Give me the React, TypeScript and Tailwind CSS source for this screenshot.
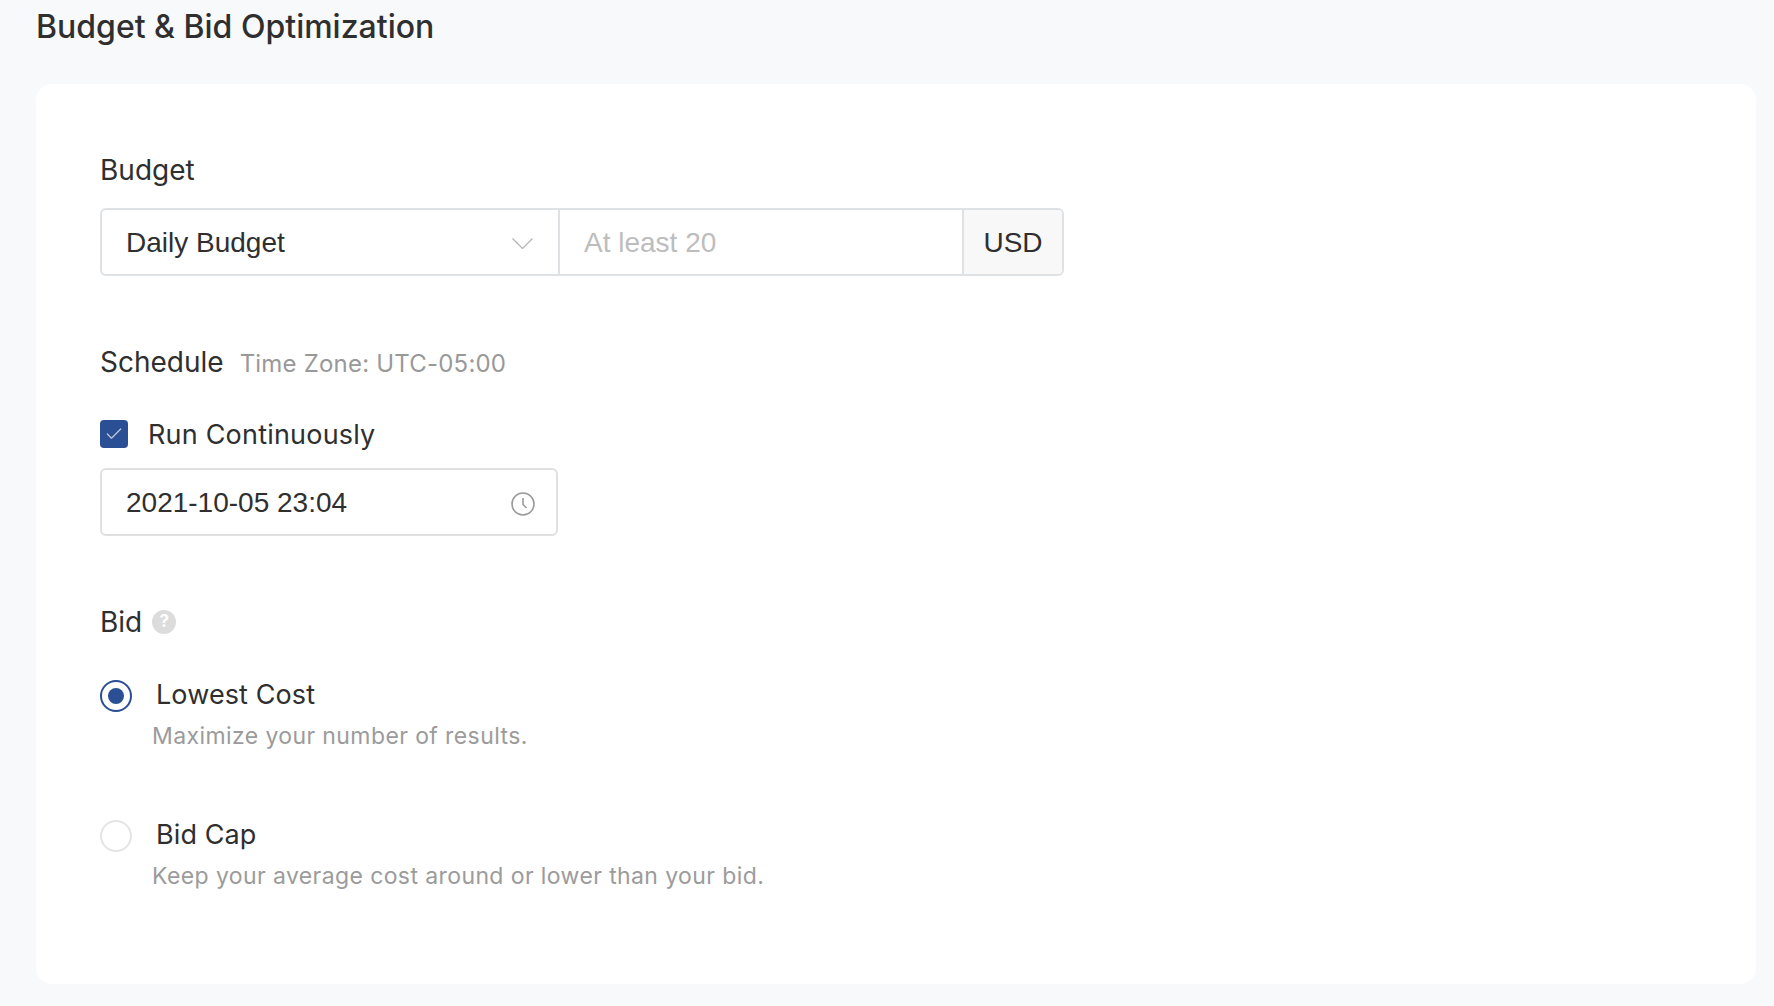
import { Check } from 'lucide-react';

function Radio({ checked }: { checked?: boolean }) {
    return (
        <span className={`flex h-8 w-8 shrink-0 items-center justify-center rounded-full border-2 ${checked ? 'border-[#2a4f94]' : 'border-[#e2e4e6]'}`}>
            {checked && <span className="h-4 w-4 rounded-full bg-[#2a4f94]" />}
        </span>
    );
}

function BidOption({ label, hint, checked }: { label: string; hint: string; checked?: boolean }) {
    return (
        <div>
            <div className="flex h-8 items-center">
                <Radio checked={checked} />
                <span className="mb-[2px] ml-6 text-[27px] tracking-[0.1px] text-[#2f2f2f]">{label}</span>
            </div>
            <p className="ml-[52px] mt-2 h-8 text-[23px] leading-8 tracking-[0.4px] text-[#9b9b9b]">{hint}</p>
        </div>
    );
}

export default function App() {
    return (
        <div className="h-[1006px] overflow-hidden bg-[#f7f9fb] pl-[36px] pr-[18px] font-['Inter',sans-serif] text-[#2f2f2f]">
            <h1 className="h-[84px] pt-[6px] text-[32px] font-medium leading-[42px]">Budget &amp; Bid Optimization</h1>
            <div className="h-[900px] rounded-[16px] bg-white pl-[64px] pt-[68px]">
                <h2 className="h-9 text-[28px] leading-9">Budget</h2>
                <div className="mt-5 flex h-[68px] w-[964px] rounded-[6px] border-2 border-[#dfe2e5] font-['Liberation_Sans',sans-serif] text-[28px]">
                    <div className="flex w-[458px] items-center justify-between border-r-2 border-[#dfe2e5] pl-6 pr-[25px]">
                        <span className="mt-[2px]">Daily Budget</span>
                        <svg viewBox="0 0 21 11" className="mt-[3px] h-[11px] w-[21px] fill-none stroke-[#b5b5b5] stroke-[1.3]">
                            <path d="M.5.5l10 10 10-10" />
                        </svg>
                    </div>
                    <div className="flex flex-1 items-center pl-6 text-[#bdbdbd]">
                        <span className="mt-[2px]">At least 20</span>
                    </div>
                    <div className="flex w-[100px] items-center justify-center rounded-r-[4px] border-l-2 border-[#dfe2e5] bg-[#f8f8f8]">
                        <span className="mt-[2px]">USD</span>
                    </div>
                </div>

                <div className="mt-[68px] flex h-9 items-center">
                    <span className="text-[28px]">Schedule</span>
                    <span className="ml-4 mt-1 text-[24px] tracking-[0.2px] text-[#999999]">Time Zone: UTC-05:00</span>
                </div>
                <label className="mt-[40px] flex h-7 items-center">
                    <span className="flex h-7 w-7 items-center justify-center rounded-[4px] bg-[#2a4f94]">
                        <Check className="h-5 w-5 text-[#b9c5da]" strokeWidth={1.6} />
                    </span>
                    <span className="ml-5 mt-[2px] text-[27px] tracking-[0.2px]">Run Continuously</span>
                </label>
                <div className="mt-5 flex h-[68px] w-[458px] items-center justify-between rounded-[6px] border-2 border-[#e0e0e0] pl-6 pr-[21px] font-['Liberation_Sans',sans-serif] text-[28px]">
                    <span className="mt-[2px]">2021-10-05 23:04</span>
                    <svg viewBox="0 0 24 24" className="mt-[3px] h-6 w-6 fill-none stroke-[#9a9a9a] stroke-[1.6]">
                        <circle cx="12" cy="12" r="11" />
                        <path d="M12 6v6.5l3.5 3.5" />
                    </svg>
                </div>

                <div className="mt-[68px] flex h-9 items-center">
                    <span className="text-[28px]">Bid</span>
                    <span className="ml-[10px] flex h-6 w-6 items-center justify-center rounded-full bg-[#dcdcdc] text-[17px] font-bold text-white">?</span>
                </div>
                <div className="mt-10">
                    <BidOption label="Lowest Cost" hint="Maximize your number of results." checked />
                </div>
                <div className="mt-[68px]">
                    <BidOption label="Bid Cap" hint="Keep your average cost around or lower than your bid." />
                </div>
            </div>
        </div>
    );
}
